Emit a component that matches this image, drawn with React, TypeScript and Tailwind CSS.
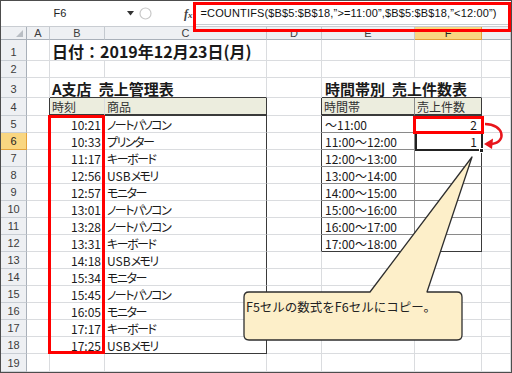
import clsx from "clsx";
import type { ReactNode } from "react";

const GR = "border-r-[#dadcdf]";
const GB = "border-b-[#dadcdf]";
const DR = "border-r-[#3a3a3a]";
const DB = "border-b-[#3a3a3a]";
const MR = "border-r-[#8a8a8a]";
const MB = "border-b-[#8a8a8a]";
const HEAD_BG = "bg-[#ecedde]";

const times = ["10:21", "10:33", "11:17", "12:56", "12:57", "13:01", "13:28", "13:31", "14:18", "15:34", "15:45", "16:05", "17:17", "17:25"];
const items = ["ノートパソコン", "プリンター", "キーボード", "USBメモリ", "モニター", "ノートパソコン", "ノートパソコン", "キーボード", "USBメモリ", "モニター", "ノートパソコン", "モニター", "キーボード", "USBメモリ"];
const bands = ["～11:00", "11:00～12:00", "12:00～13:00", "13:00～14:00", "14:00～15:00", "15:00～16:00", "16:00～17:00", "17:00～18:00"];
const counts: Record<number, string> = { 5: "2", 6: "1" };

function Cell({ w, r = GR, b = GB, className, children }: { w: string; r?: string; b?: string; className?: string; children?: ReactNode }) {
  return (
    <div className={clsx("flex shrink-0 items-end whitespace-nowrap border-r border-b leading-[14px]", w, r, b, className)}>
      {children}
    </div>
  );
}

function RowHead({ n, sel }: { n: number; sel?: boolean }) {
  return (
    <div
      className={clsx(
        "flex w-[26px] shrink-0 items-end justify-center border-r border-b pb-[2px] font-['Liberation_Sans',sans-serif] text-[11px] leading-[12px]",
        sel ? "border-r-[#e2a23c] border-b-[#e2a23c] bg-[#f9d681] text-[#222]" : "border-r-[#a9b0b9] border-b-[#c9ced4] bg-[#eef0f3] text-[#3c3c3c]"
      )}
    >
      {n}
    </div>
  );
}

// katakana part drawn narrower, like the proportional font in the sheet
function Item({ name }: { name: string }) {
  const latin = name.startsWith("USB") ? "USB" : "";
  return (
    <>
      {latin}
      <span className="tracking-[-1.5px] [font-feature-settings:'palt']">{name.slice(latin.length)}</span>
    </>
  );
}

export default function App() {
  return (
    <div className="relative h-[373px] w-[512px] overflow-hidden border border-[#4d4d4d] bg-white font-['Noto_Sans_CJK_JP',sans-serif] text-[12px] text-[#1a1a1a]">
      {/* formula bar */}
      <div className="flex h-[26px] items-center border-b border-b-[#c9cdd2] bg-white">
        <div className="w-[118px] text-center font-['Liberation_Sans',sans-serif] text-[11px] text-[#222]">F6</div>
        <svg className="ml-[8px]" width="7" height="5" viewBox="0 0 7 5">
          <path d="M0 0 L7 0 L3.5 4.5 Z" fill="#333" />
        </svg>
        <svg className="ml-[5px]" width="13" height="13" viewBox="0 0 13 13">
          <circle cx="6.5" cy="6.5" r="5.5" fill="none" stroke="#c8c8c8" strokeWidth="1.2" />
        </svg>
        <span className="ml-[32px] font-['Liberation_Serif',serif] text-[12px] font-bold italic text-[#444]">
          f<span className="text-[9px]">x</span>
        </span>
        <div className="ml-[2px] flex h-[22px] flex-1 items-center border border-[#c9cdd2] pl-[5px] font-['Liberation_Sans',sans-serif] text-[11px] tracking-[0.15px] text-[#111]">
          =COUNTIFS($B$5:$B$18,”&gt;=11:00”,$B$5:$B$18,”&lt;12:00”)
        </div>
      </div>

      {/* column headers */}
      <div className="flex h-[13px] font-['Liberation_Sans',sans-serif] text-[11px] leading-[11px] text-[#3c3c3c]">
        <div className="flex w-[26px] shrink-0 items-end justify-end border-r border-b border-r-[#a9b0b9] border-b-[#a9b0b9] bg-[#eef0f3] pr-[3px] pb-[2px]">
          <svg width="7" height="7" viewBox="0 0 7 7">
            <path d="M7 0 L7 7 L0 7 Z" fill="#b9bec4" />
          </svg>
        </div>
        {[
          ["A", "w-[23px]"],
          ["B", "w-[55px]"],
          ["C", "w-[162px]"],
          ["D", "w-[55px]"],
          ["E", "w-[93px]"],
          ["F", "w-[67px]"],
          ["", "flex-1"],
        ].map(([c, w]) => (
          <div
            key={c + w}
            className={clsx(
              "flex shrink-0 items-center justify-center border-r border-b",
              w,
              c === "F" ? "border-r-[#e2a23c] border-b-[#e2a23c] bg-[#f9d681] text-[#222]" : "border-r-[#c4c9cf] border-b-[#a9b0b9] bg-[#eef0f3]"
            )}
          >
            {c}
          </div>
        ))}
      </div>

      {/* row 1 */}
      <div className="flex h-[21px]">
        <RowHead n={1} />
        <Cell w="w-[23px]" />
        <Cell w="w-[217px]" className="pb-[1px] pl-[2px] text-[16px] font-bold leading-[16px]">
          日付：2019年12月23日(月)
        </Cell>
        <Cell w="w-[55px]" />
        <Cell w="w-[93px]" />
        <Cell w="w-[67px]" />
        <Cell w="flex-1" />
      </div>

      {/* row 2 */}
      <div className="flex h-[17px]">
        <RowHead n={2} />
        <Cell w="w-[23px]" />
        <Cell w="w-[55px]" />
        <Cell w="w-[162px]" />
        <Cell w="w-[55px]" />
        <Cell w="w-[93px]" />
        <Cell w="w-[67px]" />
        <Cell w="flex-1" />
      </div>

      {/* row 3 */}
      <div className="flex h-[20px]">
        <RowHead n={3} />
        <Cell w="w-[23px]" />
        <Cell w="w-[217px]" b={DB} className="pl-[2px] text-[15px] font-bold leading-[17px]">
          A支店<span className="ml-[7px]">売上管理表</span>
        </Cell>
        <Cell w="w-[55px]" />
        <Cell w="w-[160px]" b={DB} className="pl-[3px] text-[15px] font-bold leading-[17px]">
          時間帯別<span className="ml-[7px]">売上件数表</span>
        </Cell>
        <Cell w="flex-1" />
      </div>

      {/* row 4: table headers */}
      <div className="flex h-[18px] text-[#333]">
        <RowHead n={4} />
        <Cell w="w-[23px]" r={DR} />
        <Cell w="w-[55px]" b={DB} className={clsx("border-b-2 pl-[2px]", HEAD_BG)}>
          時刻
        </Cell>
        <Cell w="w-[162px]" r={DR} b={DB} className={clsx("border-b-2 pl-[2px]", HEAD_BG)}>
          商品
        </Cell>
        <Cell w="w-[55px]" r={DR} />
        <Cell w="w-[93px]" r={MR} b={DB} className={clsx("border-b-2 pl-[2px]", HEAD_BG)}>
          時間帯
        </Cell>
        <Cell w="w-[67px]" r={DR} b={DB} className={clsx("border-b-2 pl-[2px]", HEAD_BG)}>
          売上件数
        </Cell>
        <Cell w="flex-1" />
      </div>

      {/* rows 5-18 */}
      {times.map((t, i) => {
        const n = i + 5;
        const inRight = n <= 12;
        const last = n === 18;
        return (
          <div key={n} className="flex h-[17px]">
            <RowHead n={n} sel={n === 6} />
            <Cell w="w-[23px]" r={DR} />
            <Cell w="w-[55px]" b={last ? DB : GB} className="justify-end pr-[3px]">
              {t}
            </Cell>
            <Cell w="w-[162px]" r={DR} b={last ? DB : GB} className="pl-[2px]">
              <Item name={items[i]} />
            </Cell>
            <Cell w="w-[55px]" r={inRight ? DR : GR} />
            <Cell w="w-[93px]" r={inRight ? MR : GR} b={inRight ? (n === 12 ? DB : MB) : GB} className="pl-[3px]">
              {inRight ? bands[i] : null}
            </Cell>
            <Cell w="w-[67px]" r={inRight ? DR : GR} b={inRight ? (n === 12 ? DB : MB) : GB} className="justify-end pr-[4px]">
              {counts[n]}
            </Cell>
            <Cell w="flex-1" />
          </div>
        );
      })}

      {/* row 19 */}
      <div className="flex h-[18px]">
        <RowHead n={19} />
        <Cell w="w-[23px]" />
        <Cell w="w-[55px]" />
        <Cell w="w-[162px]" />
        <Cell w="w-[55px]" />
        <Cell w="w-[93px]" />
        <Cell w="w-[67px]" />
        <Cell w="flex-1" />
      </div>

      {/* annotations */}
      <div className="absolute left-[192px] top-[1px] h-[30px] w-[318px] border-[3px] border-[#ff0000]" />
      <div className="absolute left-[47px] top-[114px] h-[239px] w-[57px] border-[3px] border-[#ff0000]" />
      <div className="absolute left-[414px] top-[131px] h-[19px] w-[68px] border-2 border-[#222]" />
      <div className="absolute left-[478px] top-[147px] h-[5px] w-[5px] border border-white bg-[#222]" />
      <div className="absolute left-[412px] top-[115px] h-[18px] w-[71px] border-[3px] border-[#ff0000]" />

      <svg className="absolute left-0 top-0" width="512" height="373" viewBox="0 0 512 373">
        <path d="M484 123 C503 123 506 141 491 143" fill="none" stroke="#e8151b" strokeWidth="2.5" />
        <path d="M483 143 L492 137.5 L491 148 Z" fill="#e8151b" />
        <path
          d="M248 291 L369 291 L471 156 L426 291 L456 291 Q461 291 461 296 L461 334 Q461 339 456 339 L248 339 Q243 339 243 334 L243 296 Q243 291 248 291 Z"
          fill="#fdefc9"
          stroke="#2e2e2e"
          strokeWidth="1.3"
          strokeLinejoin="round"
        />
      </svg>
      <div className="absolute left-[245px] top-[297px] text-[12.5px] leading-[17px] text-[#222]">F5セルの数式をF6セルにコピー。</div>
    </div>
  );
}
